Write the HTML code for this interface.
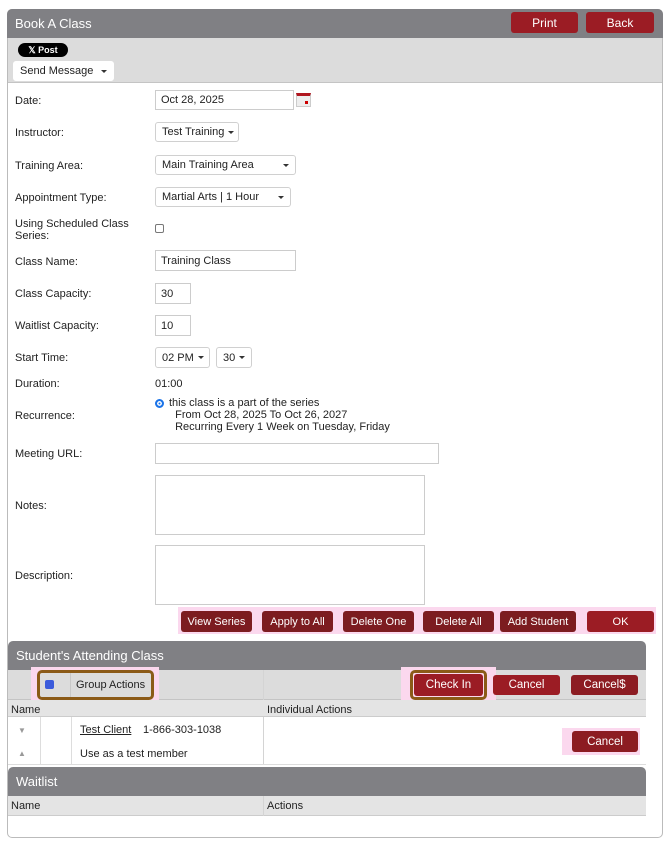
<!DOCTYPE html>
<html><head><style>
*{box-sizing:border-box;margin:0;padding:0}
body{width:670px;height:845px;background:#fff;font-family:"Liberation Sans",Arial,sans-serif;font-size:11px;color:#222;position:relative;overflow:hidden}
.a{position:absolute;white-space:nowrap}
.lbl{position:absolute;left:15px;font-size:11px;white-space:nowrap}
.in{position:absolute;border:1px solid #ccc;background:#fff;padding:0 5px;font-size:11px;display:flex;align-items:center;white-space:nowrap}
.sel{position:absolute;border:1px solid #d0d0d0;border-radius:3px;background:#fff;padding:0 6px;font-size:11px;display:flex;align-items:center;justify-content:space-between;white-space:nowrap}
.sel:after{content:"";border-left:3px solid transparent;border-right:3px solid transparent;border-top:3px solid #333;margin-left:4px;flex:none}
.btn{position:absolute;background:#9b1c24;color:#fff;border-radius:3px;font-size:11px;display:flex;align-items:center;justify-content:center;white-space:nowrap}
.btn2{position:absolute;background:#7c1c20;color:#fff;border-radius:3px;font-size:11px;display:flex;align-items:center;justify-content:center;white-space:nowrap}
.hd{position:absolute;background:#808084;color:#fff;font-size:13px;padding-left:8px;display:flex;align-items:center}
</style></head><body>
<div class="a" style="left:7px;top:9px;width:656px;height:829px;border:1px solid #bbb;border-radius:5px"></div>
<div class="hd" style="left:7px;top:9px;width:656px;height:29px;border-radius:5px 5px 0 0">Book A Class</div>
<div class="btn" style="left:511px;top:12px;width:67px;height:21px;font-size:12px">Print</div>
<div class="btn" style="left:586px;top:12px;width:68px;height:21px;font-size:12px">Back</div>
<div class="a" style="left:8px;top:38px;width:654px;height:45px;background:#dcdcdc;border-bottom:1px solid #c4c4c4"></div>
<div class="a" style="left:18px;top:43px;width:50px;height:14px;background:#000;color:#fff;border-radius:8px;font-size:9px;font-weight:bold;display:flex;align-items:center;justify-content:center">𝕏 Post</div>
<div class="sel" style="left:13px;top:61px;width:101px;height:20px;border-color:#fff">Send Message</div>

<div class="lbl" style="top:95px">Date:</div>
<div class="in" style="left:155px;top:90px;width:139px;height:20px">Oct 28, 2025</div>
<div class="a" style="left:296px;top:93px;width:15px;height:14px;border:1px solid #ccc;background:#eee;border-top:3px solid #b0161f"><div class="a" style="left:8px;top:5px;width:3px;height:3px;background:#c00"></div></div>
<div class="lbl" style="top:127px">Instructor:</div>
<div class="sel" style="left:155px;top:122px;width:84px;height:20px">Test Training</div>
<div class="lbl" style="top:160px">Training Area:</div>
<div class="sel" style="left:155px;top:155px;width:141px;height:20px">Main Training Area</div>
<div class="lbl" style="top:192px">Appointment Type:</div>
<div class="sel" style="left:155px;top:187px;width:136px;height:20px">Martial Arts | 1 Hour</div>
<div class="lbl" style="top:218px;line-height:12px">Using Scheduled Class<br>Series:</div>
<div class="a" style="left:155px;top:224px;width:9px;height:9px;border:1px solid #777;border-radius:2px"></div>
<div class="lbl" style="top:256px">Class Name:</div>
<div class="in" style="left:155px;top:250px;width:141px;height:21px">Training Class</div>
<div class="lbl" style="top:288px">Class Capacity:</div>
<div class="in" style="left:155px;top:283px;width:36px;height:21px">30</div>
<div class="lbl" style="top:320px">Waitlist Capacity:</div>
<div class="in" style="left:155px;top:315px;width:36px;height:21px">10</div>
<div class="lbl" style="top:352px">Start Time:</div>
<div class="sel" style="left:155px;top:347px;width:55px;height:21px">02 PM</div>
<div class="sel" style="left:216px;top:347px;width:36px;height:21px">30</div>
<div class="lbl" style="top:378px">Duration:</div>
<div class="a" style="left:155px;top:378px">01:00</div>
<div class="lbl" style="top:410px">Recurrence:</div>
<div class="a" style="left:155px;top:399px;width:9px;height:9px;border-radius:50%;background:#1a73e8;border:2px solid #1a73e8;box-shadow:inset 0 0 0 1.5px #fff"></div>
<div class="a" style="left:169px;top:397px;line-height:12px">this class is a part of the series<br>&nbsp;&nbsp;From Oct 28, 2025 To Oct 26, 2027<br>&nbsp;&nbsp;Recurring Every 1 Week on Tuesday, Friday</div>
<div class="lbl" style="top:448px">Meeting URL:</div>
<div class="in" style="left:155px;top:443px;width:284px;height:21px"></div>
<div class="lbl" style="top:500px">Notes:</div>
<div class="in" style="left:155px;top:475px;width:270px;height:60px"></div>
<div class="lbl" style="top:570px">Description:</div>
<div class="in" style="left:155px;top:545px;width:270px;height:60px"></div>

<div class="a" style="left:178px;top:607px;width:478px;height:27px;background:#fbd8ee"></div>
<div class="btn2" style="left:181px;top:611px;width:71px;height:21px">View Series</div>
<div class="btn2" style="left:262px;top:611px;width:71px;height:21px">Apply to All</div>
<div class="btn2" style="left:343px;top:611px;width:71px;height:21px">Delete One</div>
<div class="btn2" style="left:423px;top:611px;width:71px;height:21px">Delete All</div>
<div class="btn2" style="left:500px;top:611px;width:76px;height:21px">Add Student</div>
<div class="btn" style="left:587px;top:611px;width:67px;height:21px">OK</div>

<div class="hd" style="left:8px;top:641px;width:638px;height:29px;border-radius:5px 5px 0 0">Student's Attending Class</div>
<div class="a" style="left:8px;top:670px;width:638px;height:30px;background:#dcdcdc;border-bottom:1px solid #c4c4c4"></div>
<div class="a" style="left:263px;top:670px;width:1px;height:94px;background:#d4d4d4"></div>
<div class="a" style="left:31px;top:667px;width:128px;height:36px;background:#fbd8ee"></div>
<div class="a" style="left:37px;top:670px;width:117px;height:30px;border:3px solid #8b5a17;border-radius:5px;background:#dcdcdc"></div>
<div class="a" style="left:70px;top:673px;width:1px;height:24px;background:#c8c8c8"></div>
<div class="a" style="left:45px;top:680px;width:9px;height:9px;background:#3b5bdb;border-radius:2px"></div>
<div class="a" style="left:76px;top:679px">Group Actions</div>
<div class="a" style="left:401px;top:667px;width:95px;height:36px;background:#fbd8ee"></div>
<div class="a" style="left:410px;top:670px;width:77px;height:30px;border:3px solid #8b5a17;border-radius:5px"></div>
<div class="btn" style="left:414px;top:674px;width:69px;height:22px;font-size:11.5px">Check In</div>
<div class="btn" style="left:493px;top:675px;width:67px;height:20px;font-size:11.5px">Cancel</div>
<div class="btn2" style="left:571px;top:675px;width:67px;height:20px;font-size:11.5px;background:#8c1c22">Cancel$</div>
<div class="a" style="left:8px;top:700px;width:638px;height:17px;background:#e4e4e4;border-bottom:1px solid #ccc"></div>
<div class="a" style="left:11px;top:704px">Name</div>
<div class="a" style="left:267px;top:704px">Individual Actions</div>
<div class="a" style="left:40px;top:717px;width:1px;height:47px;background:#ddd"></div>
<div class="a" style="left:71px;top:717px;width:1px;height:47px;background:#ddd"></div>
<div class="a" style="left:18px;top:726px;color:#999;font-size:8px">▼</div>
<div class="a" style="left:18px;top:749px;color:#999;font-size:8px">▲</div>
<div class="a" style="left:80px;top:724px;text-decoration:underline">Test Client</div>
<div class="a" style="left:143px;top:724px">1-866-303-1038</div>
<div class="a" style="left:80px;top:748px">Use as a test member</div>
<div class="a" style="left:562px;top:728px;width:78px;height:27px;background:#fbd8ee"></div>
<div class="btn2" style="left:572px;top:731px;width:66px;height:21px;font-size:11.5px;background:#8c1c22">Cancel</div>
<div class="a" style="left:8px;top:764px;width:638px;height:1px;background:#ddd"></div>

<div class="hd" style="left:8px;top:767px;width:638px;height:29px;border-radius:5px 5px 0 0">Waitlist</div>
<div class="a" style="left:8px;top:796px;width:638px;height:20px;background:#e4e4e4;border-bottom:1px solid #ccc"></div>
<div class="a" style="left:263px;top:796px;width:1px;height:20px;background:#d4d4d4"></div>
<div class="a" style="left:11px;top:800px">Name</div>
<div class="a" style="left:267px;top:800px">Actions</div>
</body></html>
